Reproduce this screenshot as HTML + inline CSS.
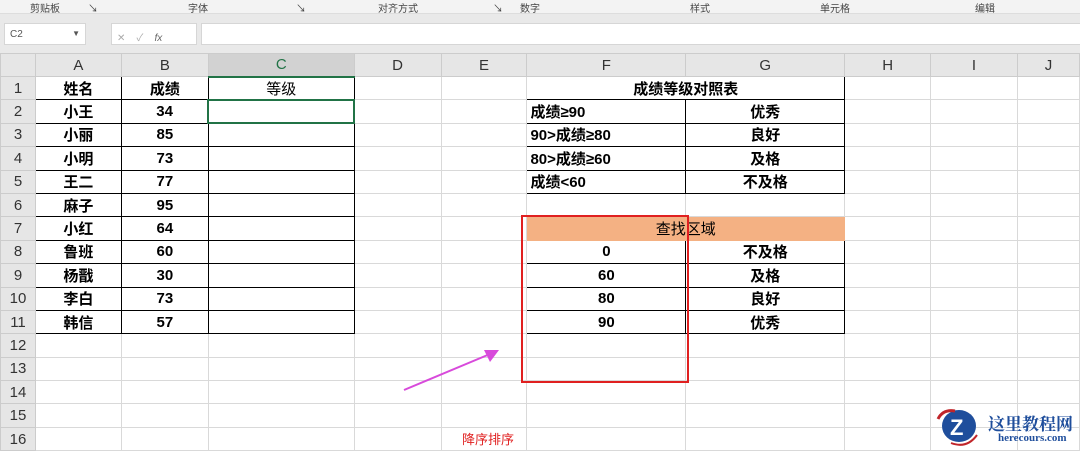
<!DOCTYPE html>
<html><head><meta charset="utf-8"><style>
*{margin:0;padding:0;box-sizing:border-box}
body{width:1080px;height:450px;overflow:hidden;background:#fff;font-family:"Liberation Sans","Noto Sans CJK SC",sans-serif;position:relative}
.rib{position:absolute;left:0;top:0;width:1080px;height:14px;background:#f3f3f3;border-bottom:1px solid #ddd;font-size:10px;color:#444}
.rib span{position:absolute;top:0}
.fb{position:absolute;left:0;top:14px;width:1080px;height:39px;background:#e9e9e9}
.box{position:absolute;background:#fff;border:1px solid #d6d6d6;font-size:10px;color:#555;padding:5px}
table{position:absolute;left:0;top:53px;border-collapse:collapse;table-layout:fixed}
td{border:1px solid #d9d9d9;height:23.4px;text-align:center;font-size:15px;color:#000;padding:0;white-space:nowrap;overflow:hidden}
tr.h td{background:#e6e6e6;color:#333;height:23px;font-size:15px;border-color:#ccc}
td.rh{background:#e6e6e6;color:#333;border-color:#ccc}
.b{font-weight:bold}
.k{border:1px solid #000}
.l{text-align:left;padding-left:3px}
</style></head><body>
<div class="rib"><span style="left:30px">剪贴板</span><span style="left:88px">↘</span><span style="left:188px">字体</span><span style="left:296px">↘</span><span style="left:378px">对齐方式</span><span style="left:493px">↘</span><span style="left:520px">数字</span><span style="left:690px">样式</span><span style="left:820px">单元格</span><span style="left:975px">编辑</span></div>
<div class="fb">
<div class="box" style="left:4px;top:9px;width:82px;height:22px">C2<span style="float:right;font-size:8px">▼</span></div>
<div class="box" style="left:111px;top:9px;width:86px;height:22px;color:#aaa">✕&nbsp;&nbsp;&nbsp;&nbsp;✓&nbsp;&nbsp;&nbsp;&nbsp;<i style="color:#666">fx</i></div>
<div class="box" style="left:201px;top:9px;width:880px;height:22px"></div>
</div>
<table>
<colgroup><col style="width:35px"><col style="width:86px"><col style="width:87px"><col style="width:146px"><col style="width:87px"><col style="width:86px"><col style="width:159px"><col style="width:159px"><col style="width:86px"><col style="width:87px"><col style="width:62px"></colgroup>
<tr class="h"><td></td><td>A</td><td>B</td><td style="background:#d2d2d2;color:#217346;border-bottom:2px solid #217346">C</td><td>D</td><td>E</td><td>F</td><td>G</td><td>H</td><td>I</td><td>J</td></tr>
<tr><td class="rh">1</td><td class="k b">姓名</td><td class="k b">成绩</td><td class="k">等级</td><td></td><td></td><td class="k b" colspan="2">成绩等级对照表</td><td></td><td></td><td></td></tr>
<tr><td class="rh">2</td><td class="k b">小王</td><td class="k b">34</td><td style="border:2px solid #217346"></td><td></td><td></td><td class="k b l">成绩≥90</td><td class="k b">优秀</td><td></td><td></td><td></td></tr>
<tr><td class="rh">3</td><td class="k b">小丽</td><td class="k b">85</td><td class="k"></td><td></td><td></td><td class="k b l">90&gt;成绩≥80</td><td class="k b">良好</td><td></td><td></td><td></td></tr>
<tr><td class="rh">4</td><td class="k b">小明</td><td class="k b">73</td><td class="k"></td><td></td><td></td><td class="k b l">80&gt;成绩≥60</td><td class="k b">及格</td><td></td><td></td><td></td></tr>
<tr><td class="rh">5</td><td class="k b">王二</td><td class="k b">77</td><td class="k"></td><td></td><td></td><td class="k b l">成绩&lt;60</td><td class="k b">不及格</td><td></td><td></td><td></td></tr>
<tr><td class="rh">6</td><td class="k b">麻子</td><td class="k b">95</td><td class="k"></td><td></td><td></td><td></td><td></td><td></td><td></td><td></td></tr>
<tr><td class="rh">7</td><td class="k b">小红</td><td class="k b">64</td><td class="k"></td><td></td><td></td><td colspan="2" style="background:#f4b183;border-color:#f4b183">查找区域</td><td></td><td></td><td></td></tr>
<tr><td class="rh">8</td><td class="k b">鲁班</td><td class="k b">60</td><td class="k"></td><td></td><td></td><td class="k b">0</td><td class="k b">不及格</td><td></td><td></td><td></td></tr>
<tr><td class="rh">9</td><td class="k b">杨戬</td><td class="k b">30</td><td class="k"></td><td></td><td></td><td class="k b">60</td><td class="k b">及格</td><td></td><td></td><td></td></tr>
<tr><td class="rh">10</td><td class="k b">李白</td><td class="k b">73</td><td class="k"></td><td></td><td></td><td class="k b">80</td><td class="k b">良好</td><td></td><td></td><td></td></tr>
<tr><td class="rh">11</td><td class="k b">韩信</td><td class="k b">57</td><td class="k"></td><td></td><td></td><td class="k b">90</td><td class="k b">优秀</td><td></td><td></td><td></td></tr>
<tr><td class="rh">12</td><td></td><td></td><td></td><td></td><td></td><td></td><td></td><td></td><td></td><td></td></tr>
<tr><td class="rh">13</td><td></td><td></td><td></td><td></td><td></td><td></td><td></td><td></td><td></td><td></td></tr>
<tr><td class="rh">14</td><td></td><td></td><td></td><td></td><td></td><td></td><td></td><td></td><td></td><td></td></tr>
<tr><td class="rh">15</td><td></td><td></td><td></td><td></td><td></td><td></td><td></td><td></td><td></td><td></td></tr>
<tr><td class="rh">16</td><td></td><td></td><td></td><td></td><td></td><td></td><td></td><td></td><td></td><td></td></tr>
</table>
<div style="position:absolute;left:521px;top:215px;width:168px;height:168px;border:2px solid #e02020"></div>
<svg style="position:absolute;left:0;top:0" width="1080" height="450"><line x1="404" y1="390" x2="490" y2="354" stroke="#d84adb" stroke-width="2"/><polygon points="499,350 484,350 490,362" fill="#d84adb"/></svg>
<div style="position:absolute;left:462px;top:429px;font-size:13px;color:#e02020">降序排序</div>
<div style="position:absolute;left:933px;top:405px;width:50px;height:42px">
<svg width="50" height="42"><ellipse cx="26" cy="21" rx="17" ry="16" fill="#1f4e9c"/><path d="M5 14 Q10 4 22 6" stroke="#c0252a" stroke-width="3" fill="none"/><path d="M18 38 Q34 44 44 30" stroke="#c0252a" stroke-width="2" fill="none"/><text x="17" y="30" font-size="22" font-weight="bold" fill="#fff" font-family="Liberation Sans">Z</text></svg></div>
<div style="position:absolute;left:988px;top:410px;font-size:17px;font-weight:bold;color:#1f4e9c;font-family:'Liberation Serif','Noto Serif CJK SC',serif">这里教程网</div>
<div style="position:absolute;left:998px;top:432px;font-size:11px;font-weight:bold;color:#1f4e9c;font-family:'Liberation Serif',serif">herecours.com</div>
</body></html>
